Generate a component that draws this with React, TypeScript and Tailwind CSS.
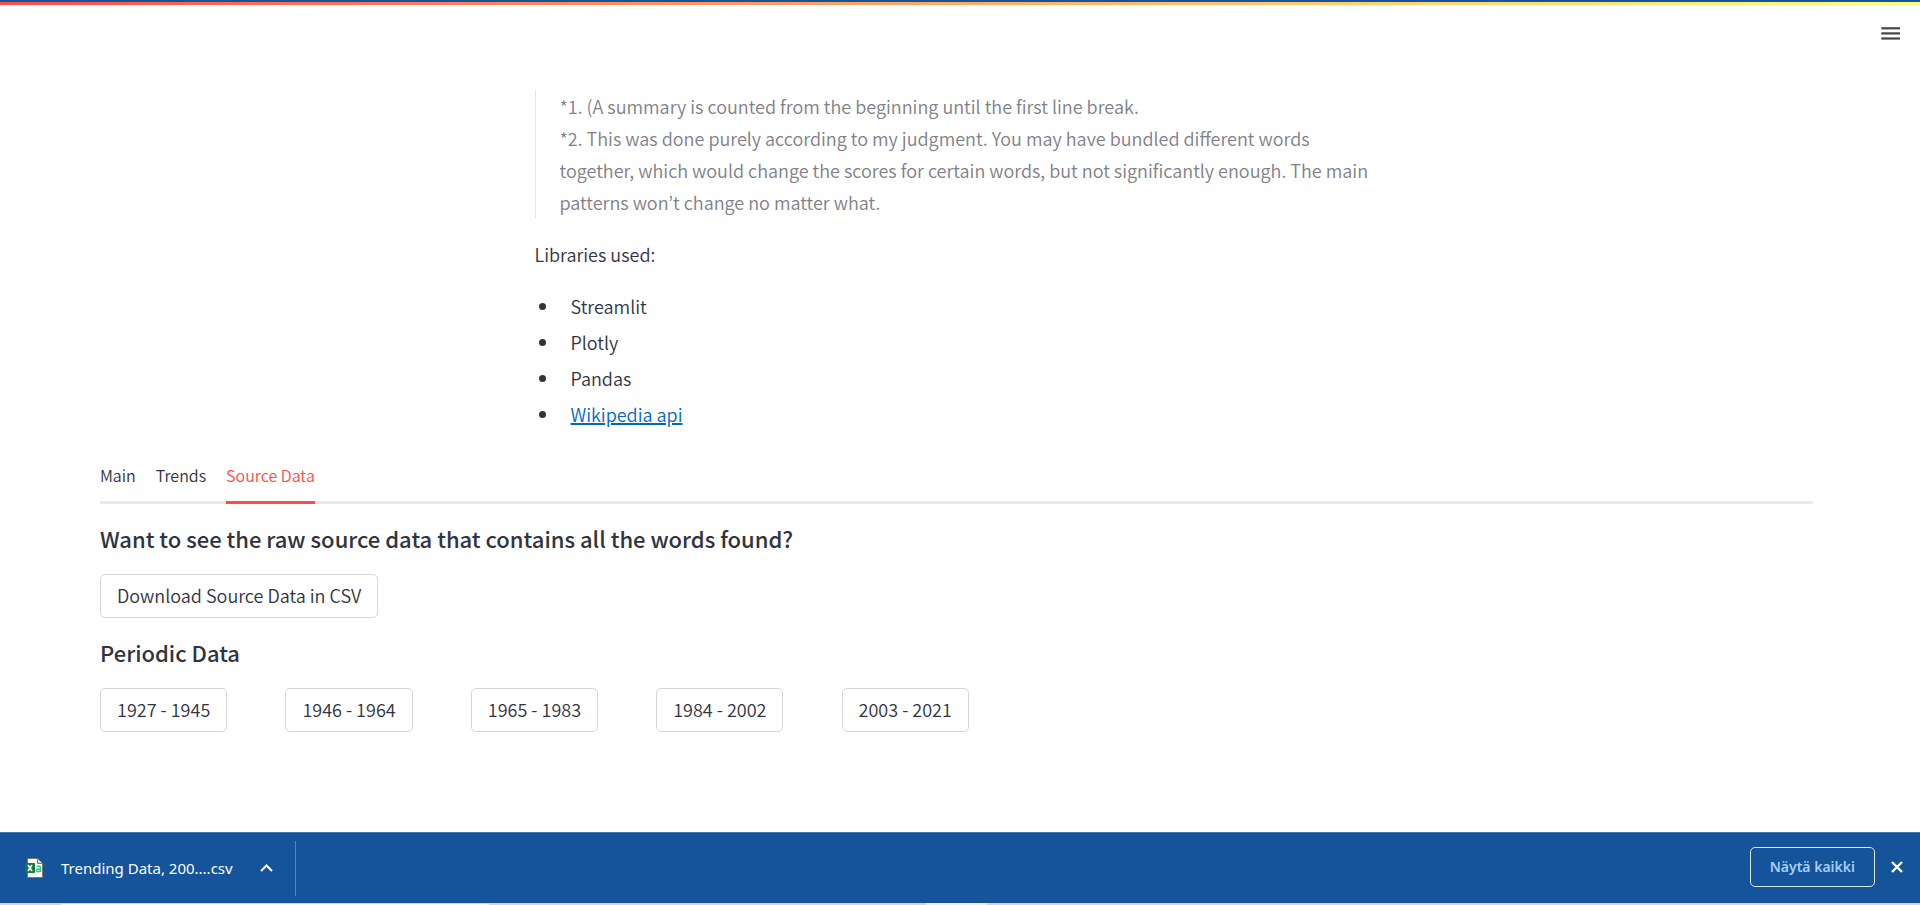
import { useState } from "react";

const libraries = ["Streamlit", "Plotly", "Pandas"];
const tabs = ["Main", "Trends", "Source Data"];
const periods = ["1927 - 1945", "1946 - 1964", "1965 - 1983", "1984 - 2002", "2003 - 2021"];

function DownloadButton({ label }: { label: string }) {
  return (
    <button
      type="button"
      className="flex h-11 items-center whitespace-nowrap rounded-[5px] border border-[#d6d6d8] bg-white px-4 pb-0.5 text-lg leading-8"
    >
      {label}
    </button>
  );
}

function MenuIcon() {
  return (
    <svg width="20" height="14" viewBox="0 0 20 14" fill="#45444f" aria-hidden="true">
      <rect x="0.3" y="0.2" width="18.7" height="2.200" />
      <rect x="0.3" y="5.300" width="18.7" height="2.200" />
      <rect x="0.3" y="10.400" width="18.7" height="2.200" />
    </svg>
  );
}

function CsvIcon() {
  return (
    <svg width="18" height="20" viewBox="0 0 18 20" aria-hidden="true">
      <path d="M2.500.5h10l5 5v14h-15z" fill="#fff" stroke="#7b7670" />
      <path d="M12.500.5v5h5" fill="#d8d8d8" stroke="#7b7670" />
      <rect x="0" y="5" width="10" height="10" rx="1" fill="#107c41" />
      <path d="M3 7l4 6M7 7l-4 6" stroke="#fff" strokeWidth="1.600" />
      <path
        d="M11.800 8.400q3.700-1 3.700 1.200v4.400M15.500 11q-3.900-.2-3.900 1.500 0 1.300 1.500 1.300 1.500 0 2.400-1.300"
        fill="none"
        stroke="#33c481"
        strokeWidth="1.500"
      />
    </svg>
  );
}

export default function App() {
  const [active, setActive] = useState("Source Data");
  return (
    <div className="flex min-h-screen flex-col bg-white font-['Noto_Sans_CJK_KR','Noto_Sans',sans-serif] text-lg leading-8 font-[350] text-[#31333f]">
      <div className="h-[2px] bg-[#15539b]" />
      <div className="h-[3px] bg-linear-to-r from-[#ff4b4b] to-[#fffd80]" />
      <header className="flex justify-end px-[19px] pt-[22px]">
        <button type="button" aria-label="Menu" className="h-3.5">
          <MenuIcon />
        </button>
      </header>

      <main className="flex-1 pt-[49px] pr-[107px] pl-[100px]">
        <section className="mx-auto max-w-[844px]">
          <blockquote className="border-l border-[#e0e6ee] pl-6 text-[#7f8088]">
            *1. (A summary is counted from the beginning until the first line break.
            <br />
            *2. This was done purely according to my judgment. You may have bundled different words together,
            which would change the scores for certain words, but not significantly enough. The main patterns
            won’t change no matter what.
          </blockquote>
          <p className="mt-5">Libraries used:</p>
          <ul className="mt-5 flex flex-col gap-1">
            {libraries.map((name) => (
              <li key={name} className="flex items-center gap-[25px] pl-1">
                <span className="size-[7px] rounded-full bg-[#31333f]" />
                {name}
              </li>
            ))}
            <li className="flex items-center gap-[25px] pl-1">
              <span className="size-[7px] rounded-full bg-[#31333f]" />
              <a href="#wikipedia" className="text-[#0068c9] underline decoration-2">Wikipedia api</a>
            </li>
          </ul>
        </section>

        <div role="tablist" className="mt-5 flex h-[54px] gap-5 border-b-[3px] border-[#e9e9ea] text-base">
          {tabs.map((tab) => (
            <button
              key={tab}
              type="button"
              role="tab"
              aria-selected={tab === active}
              onClick={() => setActive(tab)}
              className={
                tab === active
                  ? "-mb-[3px] border-b-[3px] border-[#ff4b4b] pb-px text-[#ff4b4b]"
                  : "-mb-[3px] border-b-[3px] border-transparent pb-px"
              }
            >
              {tab}
            </button>
          ))}
        </div>

        <h2 className="mt-[18px] mb-5 text-[22px] leading-8 font-medium">
          Want to see the raw source data that contains all the words found?
        </h2>
        <DownloadButton label="Download Source Data in CSV" />
        <h2 className="mt-[18px] mb-5 text-[22px] leading-8 font-medium">Periodic Data</h2>
        <div className="grid max-w-[907px] grid-cols-5 gap-5">
          {periods.map((period) => (
            <div key={period}>
              <DownloadButton label={period} />
            </div>
          ))}
        </div>
      </main>

      <footer className="flex h-[71px] items-center border-t border-[#4377b0] bg-[#15539b] font-['Noto_Sans',sans-serif] text-[15px] font-normal text-white">
        <div className="flex h-[55px] items-center border-r border-[#4b86c4] pr-[22px] pl-[25px]">
          <CsvIcon />
          <span className="ml-[18px]">Trending Data, 200....csv</span>
          <button type="button" aria-label="More actions" className="ml-[27px]">
            <svg width="13" height="8" viewBox="0 0 13 8" fill="none" stroke="#fff" strokeWidth="2" aria-hidden="true">
              <path d="M1 7l5.500-5.500L12 7" />
            </svg>
          </button>
        </div>
        <div className="ml-auto flex items-center gap-4 pr-[17px] pb-0.5">
          <button
            type="button"
            className="h-10 rounded-[5px] border border-[#dfe6ee] px-[19px] text-[14px] font-semibold text-[#a5cdfb]"
          >
            Näytä kaikki
          </button>
          <button type="button" aria-label="Close">
            <svg width="12" height="12" viewBox="0 0 12 12" stroke="#fff" strokeWidth="2.400" aria-hidden="true">
              <path d="M1 1l10 10M11 1L1 11" />
            </svg>
          </button>
        </div>
      </footer>
      <div className="flex h-[2px] bg-[#d8d3d5]">
        <div className="ml-[61px] h-[2px] w-[428px] border-t border-[#d8d3d5] bg-white" />
        <div className="ml-[437px] h-[2px] w-[61px] bg-[#f3eeef]" />
      </div>
    </div>
  );
}
